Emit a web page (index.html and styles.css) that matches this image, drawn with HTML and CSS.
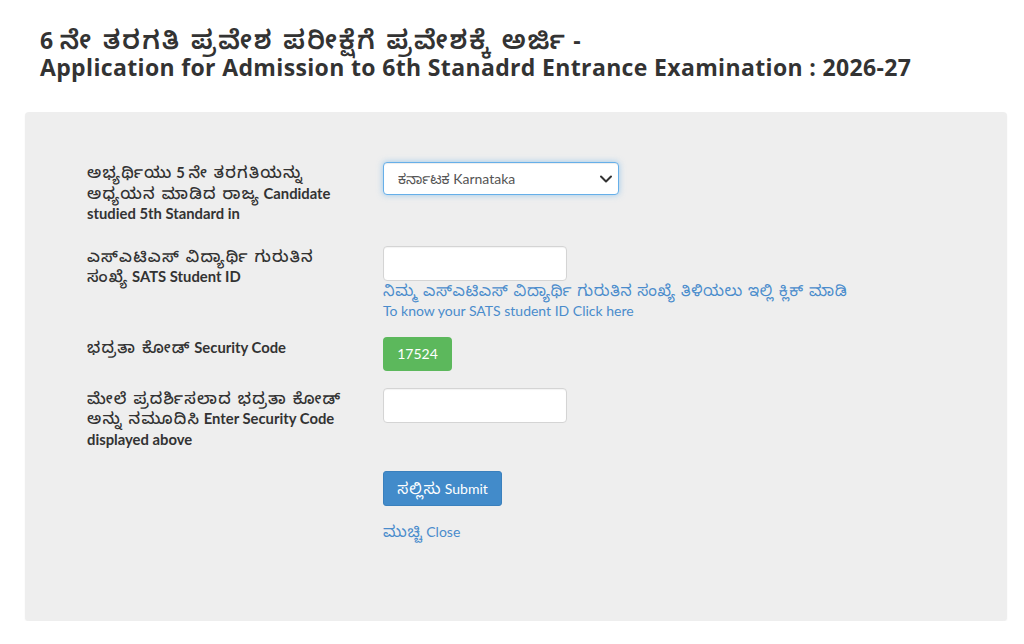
FILE: index.html
```html
<!DOCTYPE html>
<html lang="kn">
<head>
<meta charset="utf-8">
<title>Application for Admission</title>
<link rel="stylesheet" href="styles.css">
</head>
<body>
<div class="page">
  <h1 class="title">
    <span class="title-line">6 <span class="kn">ನೇ ತರಗತಿ ಪ್ರವೇಶ ಪರೀಕ್ಷೆಗೆ ಪ್ರವೇಶಕ್ಕೆ ಅರ್ಜಿ</span> -</span>
    <span class="title-line">Application for Admission to 6th Stanadrd Entrance Examination : 2026-27</span>
  </h1>
  <div class="panel">
    <div class="row row-1">
      <label class="label"><span class="kn">ಅಭ್ಯರ್ಥಿಯು</span> 5 <span class="kn">ನೇ ತರಗತಿಯನ್ನು</span><br><span class="kn">ಅಧ್ಯಯನ ಮಾಡಿದ ರಾಜ್ಯ</span> Candidate<br>studied 5th Standard in</label>
      <div class="field">
        <div class="select-wrap">
          <select class="select">
            <option>ಕರ್ನಾಟಕ Karnataka</option>
          </select>
          <svg class="chev" width="14" height="10" viewBox="0 0 14 10"><path d="M2 2.5 L7 7.5 L12 2.5" fill="none" stroke="#333" stroke-width="2" stroke-linecap="round" stroke-linejoin="round"/></svg>
        </div>
      </div>
    </div>
    <div class="row row-2">
      <label class="label"><span class="kn">ಎಸ್‌ಎಟಿಎಸ್ ವಿದ್ಯಾರ್ಥಿ ಗುರುತಿನ</span><br><span class="kn">ಸಂಖ್ಯೆ</span> SATS Student ID</label>
      <div class="field">
        <input class="input" type="text">
        <a class="link help" href="#"><span class="kn">ನಿಮ್ಮ ಎಸ್‌ಎಟಿಎಸ್ ವಿದ್ಯಾರ್ಥಿ ಗುರುತಿನ ಸಂಖ್ಯೆ ತಿಳಿಯಲು ಇಲ್ಲಿ ಕ್ಲಿಕ್ ಮಾಡಿ</span><br>To know your SATS student ID Click here</a>
      </div>
    </div>
    <div class="row row-3">
      <label class="label"><span class="kn">ಭದ್ರತಾ ಕೋಡ್</span> Security Code</label>
      <div class="field">
        <span class="code">17524</span>
      </div>
    </div>
    <div class="row row-4">
      <label class="label"><span class="kn">ಮೇಲೆ ಪ್ರದರ್ಶಿಸಲಾದ ಭದ್ರತಾ ಕೋಡ್</span><br><span class="kn">ಅನ್ನು ನಮೂದಿಸಿ</span> Enter Security Code<br>displayed above</label>
      <div class="field">
        <input class="input" type="text">
      </div>
    </div>
    <div class="row row-5">
      <span class="label"></span>
      <div class="field">
        <button class="btn" type="button"><span class="kn">ಸಲ್ಲಿಸು</span> Submit</button>
        <a class="link close" href="#"><span class="kn">ಮುಚ್ಚಿ</span> Close</a>
      </div>
    </div>
  </div>
</div>
</body>
</html>
```

FILE: styles.css
```css
html, body {
  margin: 0;
  padding: 0;
  background: #fff;
}
body {
  font-family: "Lato", "Noto Sans Kannada", "Noto Sans", sans-serif;
  font-size: 14px;
  color: #333;
}
.kn {
  font-family: "Noto Sans Kannada", "Lato", sans-serif;
  font-weight: 500;
  font-size: 1.12em;
  letter-spacing: 0.9px;
  line-height: 0;
}
.page {
  padding: 27px 17px 0 25px;
}
.title {
  margin: 0 0 31px 15px;
  font-family: "Open Sans", "Noto Sans Kannada", sans-serif;
  font-weight: 700;
  font-size: 23px;
  line-height: 27px;
  letter-spacing: 0.35px;
  color: #333;
}
.title .kn {
  font-weight: 600;
  font-size: 26px;
  letter-spacing: 2.2px;
  line-height: 0;
}
.title-line {
  display: block;
}
.panel {
  background: #eeeeee;
  border-radius: 4px;
  box-shadow: 0 1px 2px rgba(0,0,0,0.06);
  height: 459px;
  padding: 50px 0 0 62px;
}
.row {
  display: flex;
  align-items: flex-start;
}
.label {
  display: block;
  width: 270px;
  margin-right: 26px;
  font-weight: 700;
  font-size: 14.8px;
  line-height: 20.5px;
  color: #333;
  white-space: nowrap;
}
.label .kn {
  font-size: 1.08em;
  letter-spacing: 1.2px;
}
.field {
  display: flex;
  flex-direction: column;
  align-items: flex-start;
}
.row-1 { margin-bottom: 22px; }
.row-2 { margin-bottom: 16px; }
.row-3 { margin-bottom: 17px; }
.row-4 { margin-bottom: 22px; }

.select-wrap {
  position: relative;
  width: 236px;
  height: 33px;
}
.select {
  appearance: none;
  -webkit-appearance: none;
  width: 100%;
  height: 100%;
  box-sizing: border-box;
  border: 1px solid #66afe9;
  border-radius: 4px;
  box-shadow: inset 0 1px 1px rgba(0,0,0,.075), 0 0 6px rgba(102,175,233,.6);
  background: #fff;
  padding: 0 0 0 14px;
  font-family: "Lato", "Noto Sans Kannada", sans-serif;
  font-size: 14px;
  color: #555;
  outline: none;
}
.chev {
  position: absolute;
  right: 6px;
  top: 12px;
}
.input {
  width: 184px;
  height: 35px;
  box-sizing: border-box;
  border: 1px solid #d4d4d4;
  border-radius: 4px;
  background: #fff;
  box-shadow: inset 0 1px 1px rgba(0,0,0,.05);
  outline: none;
  padding: 0 10px;
}
.link {
  color: #4a8ccc;
  text-decoration: none;
  font-size: 14px;
  line-height: 20px;
}
.link .kn {
  font-weight: 400;
  letter-spacing: 0.6px;
}
.code {
  display: inline-block;
  background: #5cb85c;
  color: #fff;
  border-radius: 4px;
  width: 69px;
  height: 34px;
  line-height: 34px;
  text-align: center;
  font-size: 14px;
}
.btn {
  background: #428bca;
  border: 1px solid #3a80bd;
  color: #fff;
  border-radius: 3px;
  width: 119px;
  height: 35px;
  font-family: "Lato", "Noto Sans Kannada", sans-serif;
  font-size: 14px;
  padding: 0;
  cursor: pointer;
}
.btn .kn {
  font-weight: 400;
}
.close {
  margin-top: 16px;
}
```
